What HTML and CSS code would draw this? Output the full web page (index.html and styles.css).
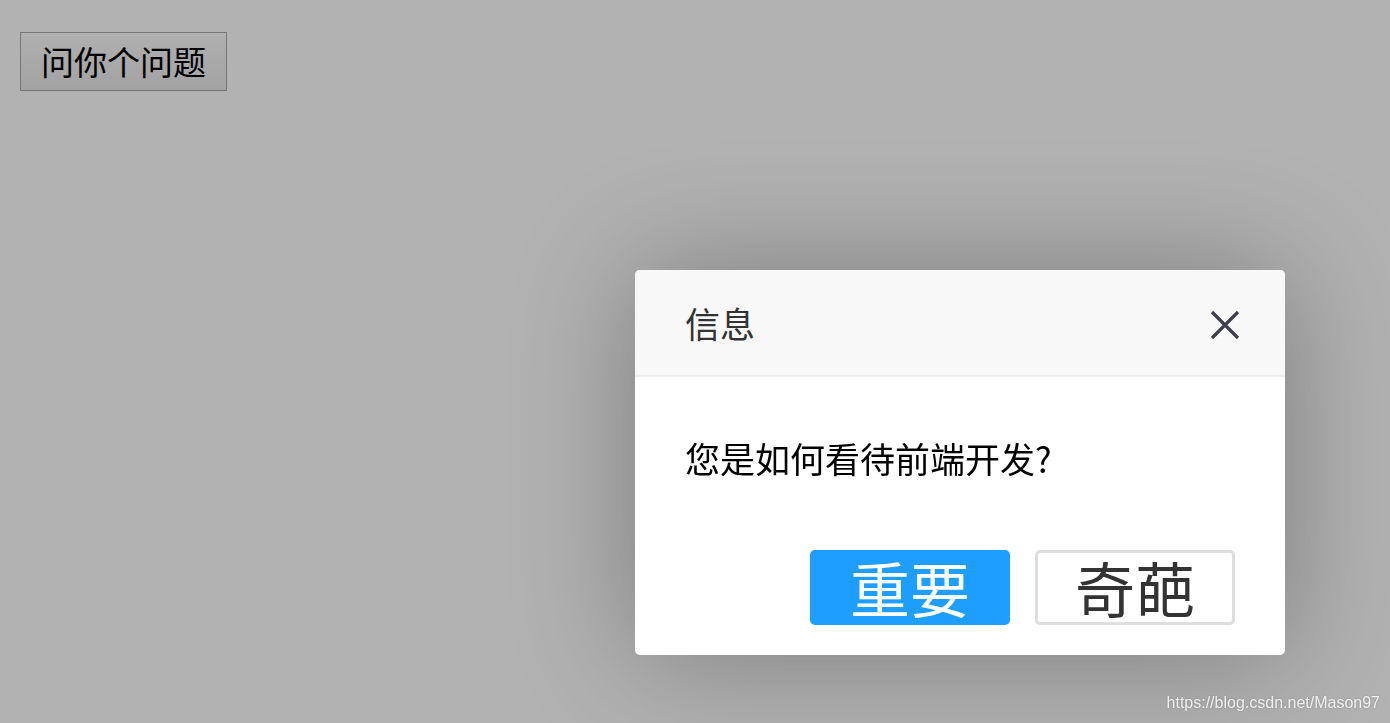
FILE: index.html
```html
<!DOCTYPE html>
<html lang="zh-CN">
<head>
<meta charset="utf-8">
<title>问你个问题</title>
<link rel="stylesheet" href="styles.css">
</head>
<body>
<main class="page">
  <button class="ask-btn" type="button">问你个问题</button>
</main>
<div class="shade"></div>
<section class="layer">
  <header class="layer-title">
    信息
    <span class="layer-close" aria-label="关闭">
      <svg width="30" height="30" viewBox="0 0 30 30">
        <path d="M2 2 L28 28 M28 2 L2 28" stroke="#3e3f4c" stroke-width="3.2" stroke-linecap="butt" fill="none"/>
      </svg>
    </span>
  </header>
  <div class="layer-content">您是如何看待前端开发?</div>
  <div class="layer-btns">
    <a class="lbtn lbtn-primary">重要</a>
    <a class="lbtn lbtn-default">奇葩</a>
  </div>
</section>
<div class="watermark">https://blog.csdn.net/Mason97</div>
</body>
</html>
```
FILE: styles.css
```css
html, body {
  margin: 0;
  padding: 0;
  height: 100%;
  background: #ffffff;
  font-family: "Microsoft YaHei", "Noto Sans CJK SC", "Noto Sans", sans-serif;
  overflow: hidden;
}

.page {
  padding: 32px 20px;
}

.ask-btn {
  display: block;
  box-sizing: border-box;
  height: 59px;
  padding: 0 20px;
  font-family: "Microsoft YaHei", "Noto Sans CJK SC", sans-serif;
  font-size: 33px;
  line-height: 57px;
  color: #000;
  background: linear-gradient(#fcfcfc, #e9e9e9);
  border: 1px solid #a9a9a9;
  border-radius: 0;
}

.shade {
  position: fixed;
  inset: 0;
  background: rgba(0, 0, 0, 0.3);
}

.layer {
  position: absolute;
  left: 635px;
  top: 270px;
  width: 650px;
  background: #fff;
  border-radius: 5px;
  box-shadow: 1px 1px 125px rgba(0, 0, 0, 0.3);
}

.layer-title {
  position: relative;
  height: 105px;
  line-height: 105px;
  padding: 0 200px 0 50px;
  font-size: 35px;
  color: #333;
  background: #f8f8f8;
  border-bottom: 2px solid #eeeeee;
  border-radius: 5px 5px 0 0;
}

.layer-close {
  position: absolute;
  right: 45px;
  top: 40px;
  width: 30px;
  height: 30px;
  line-height: 0;
}

.layer-content {
  padding: 48px 50px 52px;
  font-size: 35px;
  line-height: 66px;
  color: #000;
}

.layer-btns {
  display: flex;
  justify-content: flex-end;
  gap: 25px;
  padding: 7px 50px 30px;
}

.lbtn {
  box-sizing: border-box;
  display: block;
  width: 200px;
  height: 75px;
  line-height: 67px;
  text-align: center;
  font-size: 60px;
  border-radius: 5px;
  border: 3px solid;
}

.lbtn-primary {
  background: #1e9fff;
  border-color: #1e9fff;
  color: #fff;
}

.lbtn-default {
  background: #fff;
  border-color: #dedede;
  color: #333;
}

.watermark {
  position: absolute;
  right: 10px;
  bottom: 11px;
  font-family: "Liberation Sans", Arial, sans-serif;
  font-size: 16px;
  color: rgba(255, 255, 255, 0.85);
  text-shadow: 0 0 2px rgba(0, 0, 0, 0.25);
}
```
